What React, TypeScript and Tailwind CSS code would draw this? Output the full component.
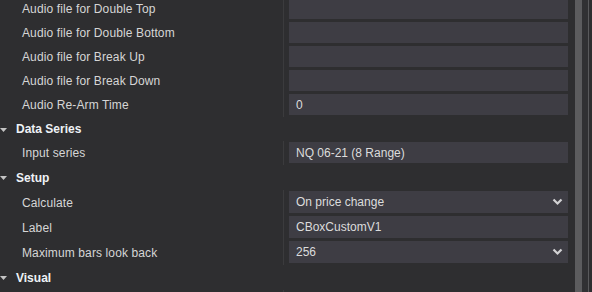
import React from "react";

type Prop = { label: string; value?: string; dropdown?: boolean; h: number };

const Chevron = () => (
  <svg width="11" height="8" viewBox="0 0 11 8" className="shrink-0">
    <polyline points="1.5,1.5 5.5,5.5 9.5,1.5" fill="none" stroke="#d2d2d4" strokeWidth="2.2" />
  </svg>
);

const Row = ({ label, value, dropdown, h }: Prop) => (
  <div className="flex" style={{ height: h }}>
    <div className="w-[283px] shrink-0 flex items-center pl-[22px] text-[12px] tracking-[0.12px] text-[#d6d6d6]">{label}</div>
    <div className="flex-1 border-l border-[#3b3b3d] pl-[5px] pr-[7px] pt-[1px] pb-[2px] flex">
      <div className="flex-1 bg-[#3e3d44] flex items-center pl-[7px] pr-[5px] text-[12px] text-[#dcdcdc]">
        <span className="flex-1">{value}</span>
        {dropdown && <Chevron />}
      </div>
    </div>
  </div>
);

const Header = ({ title, h }: { title: string; h: number }) => (
  <div className="flex items-center" style={{ height: h }}>
    <svg width="8" height="6" viewBox="0 0 8 6" className="ml-[0px] mr-[8px] mt-[1px]">
      <polygon points="0,1 7,1 3.5,5" fill="#c4c4c4" />
    </svg>
    <span className="text-[12px] font-bold text-[#eef2f6]">{title}</span>
  </div>
);

export default function App() {
  return (
    <div
      className="w-[592px] h-[292px] overflow-hidden bg-[#2e2e30] flex"
      style={{ fontFamily: '"Liberation Sans", Arial, sans-serif' }}
    >
      <div className="w-[575px] shrink-0 -mt-[3px]">
        <Row label="Audio file for Double Top" h={24} />
        <Row label="Audio file for Double Bottom" h={24} />
        <Row label="Audio file for Break Up" h={24} />
        <Row label="Audio file for Break Down" h={24} />
        <Row label="Audio Re-Arm Time" value="0" h={24} />
        <Header title="Data Series" h={24} />
        <Row label="Input series" value="NQ 06-21 (8 Range)" h={24} />
        <Header title="Setup" h={25} />
        <Row label="Calculate" value="On price change" dropdown h={25} />
        <Row label="Label" value="CBoxCustomV1" h={25} />
        <Row label="Maximum bars look back" value="256" dropdown h={25} />
        <Header title="Visual" h={25} />
        <div className="flex h-[25px]">
          <div className="w-[283px]" />
          <div className="flex-1 border-l border-[#3b3b3d]" />
        </div>
      </div>
      <div className="w-[7px] h-full bg-[#5c5c5e]" />
      <div className="w-[6px] h-full bg-[#313133]" />
      <div className="w-[1px] h-full bg-[#5a5a5c]" />
      <div className="flex-1 h-full bg-[#2e2e30]" />
    </div>
  );
}
